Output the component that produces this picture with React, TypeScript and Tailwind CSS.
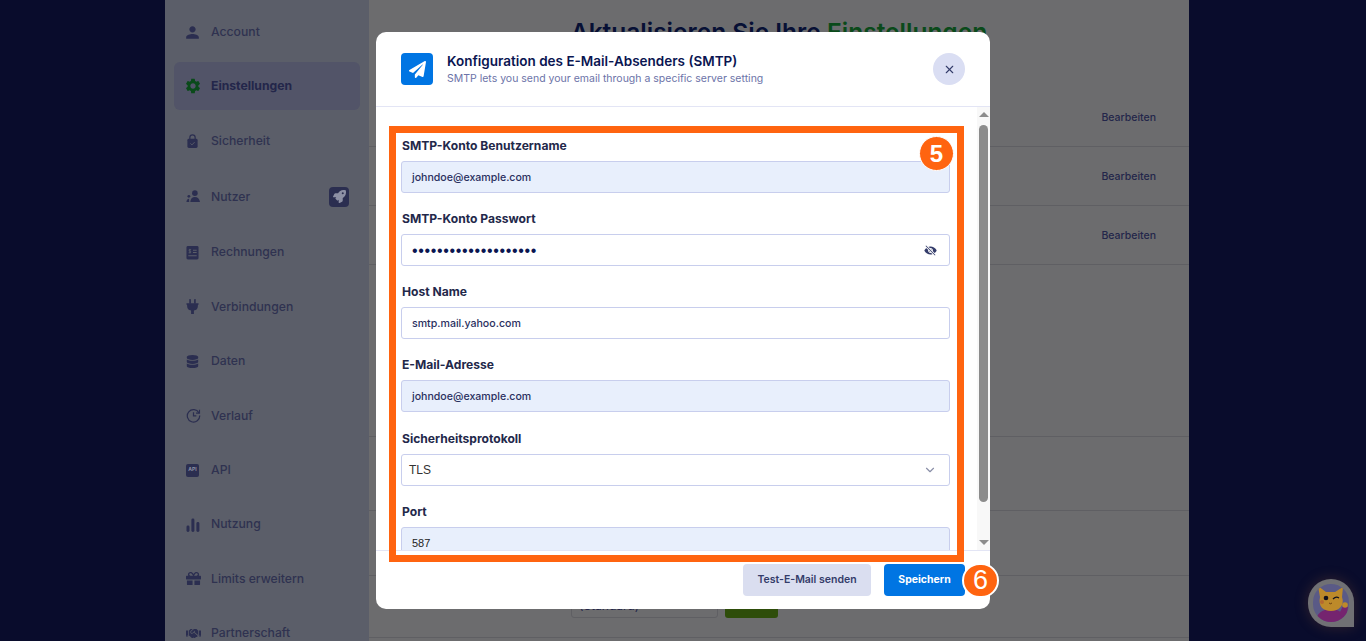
import type { ReactNode } from 'react';
import { X, ChevronDown } from 'lucide-react';
import { MdPerson, MdSettings } from 'react-icons/md';
import { FaDatabase, FaGift, FaHandshake, FaRocket, FaPaperPlane } from 'react-icons/fa';
import { IoEyeOff } from 'react-icons/io5';

const LockIcon = () => (
  <svg viewBox="0 0 14 16" className="w-[13px] h-[16px]" fill="#2b2e50">
    <path d="M3.500 6V4.200a3.500 3.500 0 0 1 7 0V6H9.200V4.200a2.200 2.200 0 0 0-4.400 0V6z" />
    <rect x="1.500" y="5.500" width="11" height="10" rx="1.600" />
    <path d="M4.800 10.600l1.600 1.600 2.900-3" stroke="#5b5e69" strokeWidth="1" fill="none" />
  </svg>
);

const UsersIcon = () => (
  <svg viewBox="0 0 16 14" className="w-[15px] h-[13px]" fill="#2b2e50">
    <circle cx="9.500" cy="3.400" r="3" />
    <path d="M4.600 13c0-3.400 2-5.400 4.900-5.400s5 2 5.500 5.400z" />
    <circle cx="3" cy="6.800" r="1.500" />
    <path d="M0.400 13c0-2 1-3.400 2.800-3.500L3.400 13z" />
  </svg>
);

const BillIcon = () => (
  <svg viewBox="0 0 14 15" className="w-[13px] h-[14px]">
    <rect width="13" height="14.500" x="0.500" rx="1.600" fill="#2b2e50" />
    <path d="M7.500 4.500h4M7.500 7h4M2.500 10.500h9" stroke="#5b5e69" strokeWidth="1.100" />
    <path d="M5.500 3.800H3.400v1.700h1.600v1.700H2.800M4.200 3v5" stroke="#5b5e69" strokeWidth="0.800" fill="none" />
  </svg>
);

const PlugIcon = () => (
  <svg viewBox="0 0 14 16" className="w-[13px] h-[15px]" fill="#2b2e50">
    <rect x="3.500" y="0" width="1.800" height="5" rx="0.500" />
    <rect x="8.700" y="0" width="1.800" height="5" rx="0.500" />
    <path d="M0.500 4.500h13v1.500h-0.700v1.500a5 5 0 0 1-4.300 4.900V16h-3v-3.600a5 5 0 0 1-4.300-4.900V6H0.500z" />
  </svg>
);

const HistoryIcon = () => (
  <svg viewBox="0 0 16 16" className="w-[15px] h-[15px]" fill="none" stroke="#2b2e50" strokeWidth="1.300">
    <path d="M13.800 5.200A6.600 6.600 0 1 0 14.600 8" />
    <path d="M14.400 1.800v3.700h-3.700" strokeWidth="1.200" />
    <path d="M8 4.400V8.300h3" />
  </svg>
);

const BarsIcon = () => (
  <svg viewBox="0 0 14 14" className="w-[14px] h-[14px]" fill="#2b2e50">
    <rect x="0.500" y="7.500" width="3" height="6.500" rx="1.400" />
    <rect x="5.400" y="0.500" width="3" height="13.500" rx="1.400" />
    <rect x="10.400" y="4" width="3" height="10" rx="1.400" />
  </svg>
);

const navItems: { label: string; icon: ReactNode; active?: boolean; tall?: boolean; badge?: boolean }[] = [
  { label: 'Account', icon: <MdPerson size={19} color="#2b2e50" className="-ml-[3px]" /> },
  { label: 'Einstellungen', icon: <MdSettings size={18} color="#0a4a1a" className="-ml-[2px]" />, active: true },
  { label: 'Sicherheit', icon: <LockIcon /> },
  { label: 'Nutzer', icon: <UsersIcon />, tall: true, badge: true },
  { label: 'Rechnungen', icon: <BillIcon /> },
  { label: 'Verbindungen', icon: <PlugIcon /> },
  { label: 'Daten', icon: <FaDatabase size={13} color="#2b2e50" /> },
  { label: 'Verlauf', icon: <HistoryIcon /> },
  {
    label: 'API',
    icon: (
      <span className="w-[13px] h-[13px] rounded-[2px] bg-[#2b2e50] text-[#8d90a4] text-[5px] font-bold flex items-center justify-center">
        API
      </span>
    ),
  },
  { label: 'Nutzung', icon: <BarsIcon /> },
  { label: 'Limits erweitern', icon: <FaGift size={15} color="#2b2e50" /> },
  { label: 'Partnerschaft', icon: <FaHandshake size={15} color="#2b2e50" /> },
];

const Sidebar = () => (
  <div className="w-[204px] shrink-0 bg-[#5b5e69] h-full overflow-hidden pt-[8px] px-[9px] flex flex-col gap-[6.4px]">
    {navItems.map((item) => (
      <div
        key={item.label}
        className={`${item.tall ? 'h-[51px]' : 'h-[48px]'} shrink-0 flex items-center rounded-[6px] pl-[12px] pr-[11px] ${item.active ? 'bg-[#525468]' : ''}`}
      >
        <span className="w-[25px] flex justify-start">{item.icon}</span>
        <span className={`text-[12.2px] flex-1 ${item.active ? 'font-bold text-[#23264a]' : 'font-medium text-[#2f3250]'}`}>
          {item.label}
        </span>
        {item.badge && (
          <span className="w-[20px] h-[20px] rounded-[4px] bg-[#2b2e50] flex items-center justify-center">
            <FaRocket size={13} color="#8d90a4" />
          </span>
        )}
      </div>
    ))}
  </div>
);

const SettingRow = ({ h }: { h: string }) => (
  <div className={`${h} shrink-0 border-b border-[#5f5f63] flex items-center justify-end pr-[33px] pt-[2px] text-[10.5px] font-medium text-[#23264a]`}>
    Bearbeiten
  </div>
);

const MainArea = () => (
  <div className="flex-1 bg-[#6c6c6e] h-full overflow-hidden flex flex-col">
    <div className="h-[87px] shrink-0 pt-[15px] text-center text-[24.5px] leading-[34px] font-semibold text-[#071035]">
      Aktualisieren Sie Ihre <span className="text-[#0a4a1a]">Einstellungen</span>
    </div>
    <SettingRow h="h-[60px]" />
    <SettingRow h="h-[59px]" />
    <SettingRow h="h-[59px]" />
    <div className="h-[172px] shrink-0 border-b border-[#5f5f63]" />
    <div className="h-[74px] shrink-0 border-b border-[#5f5f63]" />
    <div className="h-[65px] shrink-0 border-b border-[#5f5f63]" />
    <div className="h-[62px] shrink-0 border-b border-[#5f5f63] flex items-start gap-[7px] pt-[10px] pl-[202px]">
      <div className="w-[147px] h-[32px] rounded-[3px] border border-[#5f5f63] pl-[7px] pt-[8px] flex items-center text-[12px] text-[#23264a]">
        (Standard)
      </div>
      <div className="w-[53px] h-[32px] rounded-[3px] bg-[#2e4d0a]" />
    </div>
  </div>
);

const Field = ({ label, value, filled = true, children }: { label: string; value: ReactNode; filled?: boolean; children?: ReactNode }) => (
  <div className="mb-[15.15px] shrink-0">
    <div className="h-[20px] mb-[6px] pt-[2px] flex items-center pl-px text-[12.1px] font-bold text-[#23284a]">{label}</div>
    <div
      className={`h-[32px] rounded-[3px] border border-[#c8ceed] pl-[10px] pr-[12px] pt-[1px] flex items-center justify-between text-[10.6px] font-medium text-[#2a3060] ${filled ? 'bg-[#e8effc]' : 'bg-white'}`}
    >
      {value}
      {children}
    </div>
  </div>
);

const CatBubble = () => (
  <div className="absolute left-[1308px] top-[579px] w-[46px] h-[48px] rounded-full rounded-br-[3px] bg-[#707074] p-[5px] shadow-[0_0_14px_rgba(150,90,50,0.3)]">
    <svg viewBox="0 0 36 38" className="w-full h-full rounded-full bg-[#5a5a86]">
      <path d="M3 38c0-8 6-13 15-13s13 5 14 13z" fill="#75246f" />
      <path d="M26 30l4-8 5 1-2 12z" fill="#75246f" />
      <path d="M5 2l8 6h9l8-5-1 10c3 8-3 14-11 14S5 22 7 13z" fill="#bd8a2a" />
      <circle cx="13" cy="14" r="2.300" fill="#14121c" />
      <path d="M20 15q3-3 6-1" stroke="#14121c" strokeWidth="1.200" fill="none" />
      <circle cx="9" cy="18" r="2" fill="#b5682f" />
      <path d="M16 19q1.500 1.500 3 0" stroke="#5a3010" strokeWidth="0.800" fill="none" />
      <circle cx="32" cy="21" r="2.800" fill="#bd8a2a" />
    </svg>
  </div>
);

export default function App() {
  return (
    <div className="relative w-full h-[641px] overflow-hidden bg-[#090c2c] font-['Inter',sans-serif]">
      {/* page sits left of where a 12px scrollbar would be */}
      <div className="h-full pr-[12px]">
        <div className="w-[1024px] h-full mx-auto flex">
          <Sidebar />
          <MainArea />
        </div>
      </div>

      <CatBubble />

      {/* modal with the two tutorial markers on top of it */}
      <div className="absolute inset-0 flex items-center justify-center">
        <div className="relative w-[614px] h-[577px] bg-white rounded-[10px] flex flex-col overflow-visible">
          <div className="h-[75px] shrink-0 border-b border-[#e3e5f5] flex items-center pl-[25px] pr-[25px]">
            <div className="w-[32px] h-[32px] rounded-[4px] bg-[#0075e3] flex items-center justify-center">
              <FaPaperPlane size={17} color="white" />
            </div>
            <div className="ml-[14px] flex-1">
              <div className="text-[13.5px] leading-[18px] font-semibold text-[#0a1551]">
                Konfiguration des E-Mail-Absenders (SMTP)
              </div>
              <div className="mt-[2px] text-[10.5px] leading-[14px] text-[#6c73a8]">
                SMTP lets you send your email through a specific server setting
              </div>
            </div>
            <div className="w-[32px] h-[32px] rounded-full bg-[#dadef3] flex items-center justify-center">
              <X size={13} color="#343c6a" strokeWidth={2} />
            </div>
          </div>

          <div className="flex-1 min-h-0 flex">
            <div className="flex-1 min-w-0 overflow-hidden pt-[28px] pl-[25px] pr-[27px] flex flex-col">
              <Field label="SMTP-Konto Benutzername" value="johndoe@example.com" />
              <Field
                label="SMTP-Konto Passwort"
                filled={false}
                value={<span className="font-['Liberation_Sans',sans-serif] text-[16px] text-[#0a1551] tracking-[0.65px]">••••••••••••••••••••</span>}
              >
                <IoEyeOff size={13} color="#343c6a" />
              </Field>
              <Field label="Host Name" filled={false} value="smtp.mail.yahoo.com" />
              <Field label="E-Mail-Adresse" value="johndoe@example.com" />
              <Field
                label="Sicherheitsprotokoll"
                filled={false}
                value={<span className="-ml-[3px] font-['Liberation_Sans',sans-serif] font-normal text-[12px] text-[#333]">TLS</span>}
              >
                <ChevronDown size={14} color="#8a8fa8" />
              </Field>
              <Field label="Port" value={<span className="font-['Liberation_Sans',sans-serif] font-normal text-[11px] text-[#222]">587</span>} />
            </div>
            <div className="w-[13px] shrink-0 bg-[#f8f8f8] flex flex-col items-center pt-[5px] pb-[5px]">
              <div className="w-0 h-0 border-x-[5px] border-x-transparent border-b-[5px] border-b-[#8c8c8c]" />
              <div className="mt-[8px] w-[9px] h-[377px] rounded-full bg-[#8c8c8c]" />
              <div className="mt-auto w-0 h-0 border-x-[5px] border-x-transparent border-t-[5px] border-t-[#8c8c8c]" />
            </div>
          </div>

          <div className="h-[59px] shrink-0 border-t border-[#e3e5f5] flex items-start justify-end gap-[13px] pt-[13px] pr-[25px]">
            <div className="w-[128px] h-[32px] rounded-[4px] bg-[#dadef0] flex items-center justify-center text-[10.5px] font-semibold text-[#343c6a]">
              Test-E-Mail senden
            </div>
            <div className="w-[81px] h-[32px] rounded-[4px] bg-[#0075e3] flex items-center justify-center text-[10.5px] font-bold text-white">
              Speichern
            </div>
          </div>

          <div className="absolute left-[13px] top-[94px] w-[575px] h-[436px] border-[7px] border-[#ff6410]" />
          <div className="absolute left-[543px] top-[104px] w-[35px] h-[35px] rounded-full bg-[#ff6410] border border-white flex items-center justify-center text-white text-[24px] font-bold font-['Liberation_Sans',sans-serif]">
            5
          </div>
          <div className="absolute left-[586px] top-[531px] w-[37px] h-[35px] rounded-full bg-[#ff6410] border-2 border-white flex items-center justify-center text-white text-[27px] font-['Liberation_Sans',sans-serif]">
            6
          </div>
        </div>
      </div>
    </div>
  );
}
